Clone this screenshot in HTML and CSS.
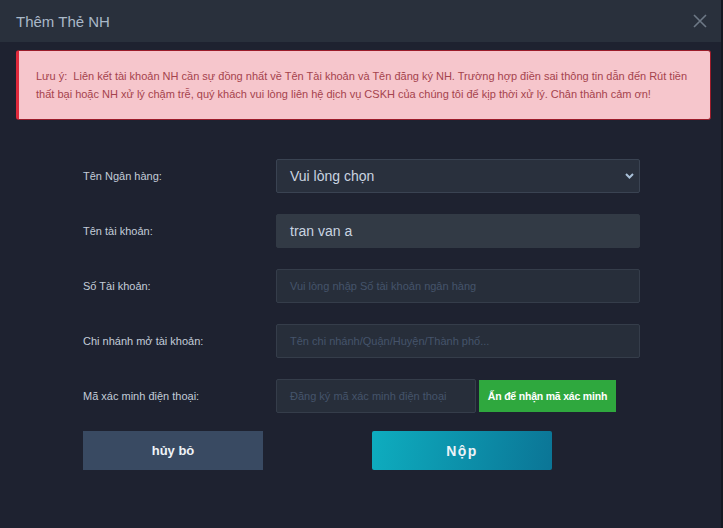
FILE: index.html
```html
<!DOCTYPE html>
<html lang="vi">
<head>
<meta charset="utf-8">
<title>Thêm Thẻ NH</title>
<link rel="stylesheet" href="styles.css">
</head>
<body>
<div class="modal">
  <div class="modal-header">
    <h2 class="modal-title">Thêm Thẻ NH</h2>
    <button class="close" aria-label="Đóng">
      <svg width="14" height="14" viewBox="0 0 14 14"><path d="M1 1L13 13M13 1L1 13" stroke="#6d7886" stroke-width="1.6" fill="none"/></svg>
    </button>
  </div>
  <div class="modal-body">
    <div class="alert">Lưu ý:&nbsp; Liên kết tài khoản NH cần sự đồng nhất về Tên Tài khoản và Tên đăng ký NH. Trường hợp điền sai thông tin dẫn đến Rút tiền thất bại hoặc NH xử lý chậm trễ, quý khách vui lòng liên hệ dịch vụ CSKH của chúng tôi để kịp thời xử lý. Chân thành cảm ơn!</div>
    <form class="form">
      <label class="label">Tên Ngân hàng:</label>
      <div class="control select">
        <span class="value">Vui lòng chọn</span>
        <svg class="chev" width="9" height="6" viewBox="0 0 9 6"><path d="M1 1L4.5 4.5L8 1" stroke="#a9c0d8" stroke-width="2" fill="none"/></svg>
      </div>
      <label class="label">Tên tài khoản:</label>
      <div class="control filled"><span class="value">tran van a</span></div>
      <label class="label">Số Tài khoản:</label>
      <div class="control"><span class="ph">Vui lòng nhập Số tài khoản ngân hàng</span></div>
      <label class="label">Chi nhánh mở tài khoản:</label>
      <div class="control"><span class="ph">Tên chi nhánh/Quận/Huyện/Thành phố...</span></div>
      <label class="label">Mã xác minh điện thoại:</label>
      <div class="code-row">
        <div class="control short"><span class="ph">Đăng ký mã xác minh điện thoại</span></div>
        <button type="button" class="btn-code">Ấn để nhận mã xác minh</button>
      </div>
    </form>
    <div class="actions">
      <button type="button" class="btn btn-cancel">hủy bỏ</button>
      <button type="button" class="btn btn-submit">Nộp</button>
    </div>
  </div>
</div>
</body>
</html>
```
FILE: styles.css
```css
html, body {
  margin: 0;
  padding: 0;
  background: #141821;
  height: 100%;
}
body {
  font-family: "Liberation Sans", Arial, sans-serif;
}
.modal {
  width: 721px;
  height: 528px;
  background: #1e2230;
  display: flex;
  flex-direction: column;
}
.modal-header {
  height: 42px;
  background: #29303c;
  display: flex;
  align-items: center;
  justify-content: space-between;
  padding: 0 14px 0 16px;
}
.modal-title {
  margin: 0;
  font-weight: normal;
  font-size: 15px;
  color: #a9b8c8;
}
.close {
  background: none;
  border: 0;
  padding: 0;
  width: 14px;
  height: 14px;
  display: flex;
}
.modal-body {
  padding: 8px 10px 0 16px;
}
.alert {
  background: #f6c6cc;
  border: 1px solid #9b1c2a;
  border-left: 3px solid #e02a3c;
  border-radius: 3px;
  color: #a5434d;
  font-size: 11px;
  line-height: 18px;
  padding: 16px 16px 16px 17px;
}
.form {
  margin: 39px 0 0 67px;
  display: grid;
  grid-template-columns: 193px 364px;
  row-gap: 21px;
  align-items: center;
}
.label {
  font-size: 11px;
  color: #c3ccd8;
}
.control {
  height: 34px;
  box-sizing: border-box;
  background: #272e3a;
  border: 1px solid #353d4a;
  border-radius: 2px;
  display: flex;
  align-items: center;
  padding: 0 13px;
}
.select {
  background: #29303d;
  border-color: #3a4352;
  justify-content: space-between;
  padding-right: 5px;
}
.filled {
  background: #323a45;
  border-color: #323a45;
}
.value {
  font-size: 14px;
  color: #c9d4e0;
}
.ph {
  font-size: 11px;
  color: #45546b;
}
.code-row {
  display: flex;
  align-items: center;
  gap: 3px;
}
.short {
  width: 200px;
}
.btn-code {
  height: 32px;
  width: 137px;
  border: 0;
  background: #2fa83e;
  color: #ffffff;
  font-family: inherit;
  font-weight: bold;
  font-size: 10.5px;
  letter-spacing: -0.2px;
  padding: 0;
}
.actions {
  display: flex;
  gap: 109px;
  margin: 18px 0 0 67px;
}
.btn {
  width: 180px;
  height: 39px;
  border: 0;
  font-family: inherit;
  font-weight: bold;
  color: #eef3f7;
  padding: 0;
}
.btn-cancel {
  background: #394a62;
  font-size: 13px;
}
.btn-submit {
  background: linear-gradient(100deg, #0eadbf 0%, #0b7596 100%);
  border-radius: 2px;
  font-size: 14px;
  letter-spacing: 1.5px;
}
```
